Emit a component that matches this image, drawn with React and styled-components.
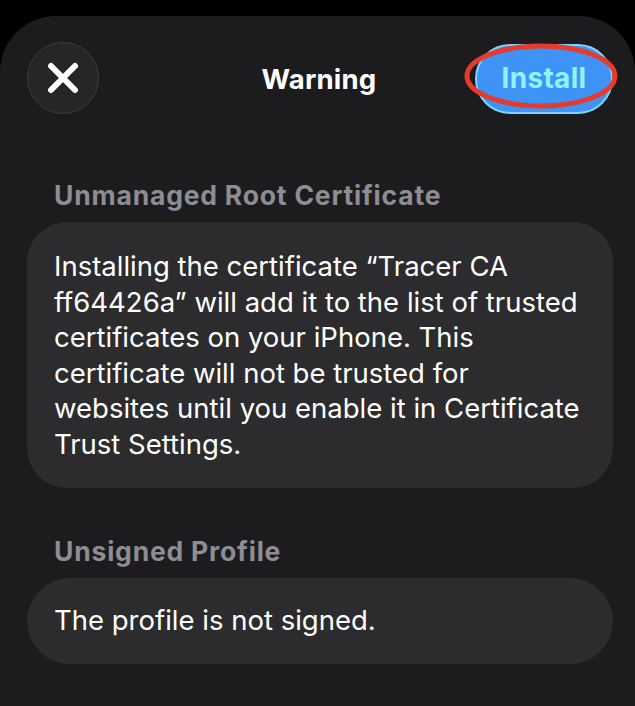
import React from 'react';
import styled, { createGlobalStyle } from 'styled-components';

const GlobalStyle = createGlobalStyle`
  html, body {
    margin: 0;
    padding: 0;
    background: #000;
  }
  body {
    font-family: Inter, "Noto Sans", "Liberation Sans", sans-serif;
    -webkit-font-smoothing: antialiased;
  }
`;

const Page = styled.div`
  width: 635px;
  height: 706px;
  padding-top: 16px;
  box-sizing: border-box;
  background: #000;
  overflow: hidden;
`;

const Sheet = styled.div`
  height: 100%;
  background: #1c1c1e;
  border-radius: 56px 56px 0 0;
  padding: 27px 22px 0 27px;
  box-sizing: border-box;
`;

const Header = styled.header`
  display: grid;
  grid-template-columns: 1fr auto 1fr;
  align-items: center;
  height: 70px;
`;

const CloseButton = styled.button`
  justify-self: start;
  width: 72px;
  height: 72px;
  border-radius: 50%;
  background: #262628;
  border: 1.5px solid #3c3c3f;
  display: flex;
  align-items: center;
  justify-content: center;
  padding: 0;
  margin-top: -1px;
`;

const Title = styled.h1`
  margin: 0;
  color: #fff;
  font-size: 27.5px;
  font-weight: 700;
  letter-spacing: 0.2px;
  transform: translateX(-1px);
`;

const InstallWrap = styled.div`
  justify-self: end;
  position: relative;
`;

const InstallButton = styled.button`
  width: 138px;
  height: 70px;
  border-radius: 35px;
  background: #3f93f4;
  border: 2px solid #7fd4ff;
  color: #8ff3ff;
  font-family: inherit;
  font-size: 28px;
  font-weight: 700;
  letter-spacing: 0.3px;
  padding: 0 0 2px 0;
`;

const Annotation = styled.svg`
  position: absolute;
  left: -11px;
  top: -1px;
  pointer-events: none;
`;

const SectionTitle = styled.h2`
  margin: ${({ $top }) => $top}px 0 0 27px;
  color: #8d8d93;
  font-size: 26.5px;
  font-weight: 700;
  letter-spacing: 0.8px;
  line-height: 30px;
`;

const Card = styled.div`
  margin-top: ${({ $gap }) => $gap}px;
  background: #2c2c2e;
  border-radius: ${({ $radius }) => $radius}px;
  padding: ${({ $pad }) => $pad};
  color: #fff;
  font-size: 27.5px;
  line-height: 35.5px;
  letter-spacing: 0;
`;

const Line = styled.div`
  white-space: nowrap;
`;

const certLines = [
  'Installing the certificate \u201CTracer CA',
  'ff64426a\u201D will add it to the list of trusted',
  'certificates on your iPhone. This',
  'certificate will not be trusted for',
  'websites until you enable it in Certificate',
  'Trust Settings.',
];

const XIcon = () => (
  <svg width="34" height="34" viewBox="0 0 34 34">
    <path
      d="M5 5 L29 29 M29 5 L5 29"
      stroke="#fff"
      strokeWidth="6"
      strokeLinecap="round"
    />
  </svg>
);

const App = () => (
  <>
    <GlobalStyle />
    <Page>
      <Sheet>
        <Header>
          <CloseButton aria-label="Close">
            <XIcon />
          </CloseButton>
          <Title>Warning</Title>
          <InstallWrap>
            <InstallButton>Install</InstallButton>
            <Annotation width="154" height="70" viewBox="0 0 154 70">
              <ellipse
                cx="77"
                cy="33"
                rx="74"
                ry="30"
                fill="none"
                stroke="#e63a2c"
                strokeWidth="5"
              />
            </Annotation>
          </InstallWrap>
        </Header>

        <SectionTitle $top={67}>Unmanaged Root Certificate</SectionTitle>
        <Card $gap={12} $radius={40} $pad="27px 10px 26px 27px">
          {certLines.map((line) => (
            <Line key={line}>{line}</Line>
          ))}
        </Card>

        <SectionTitle $top={48}>Unsigned Profile</SectionTitle>
        <Card $gap={12} $radius={43} $pad="25px 27px">
          The profile is not signed.
        </Card>
      </Sheet>
    </Page>
  </>
);

export default App;
